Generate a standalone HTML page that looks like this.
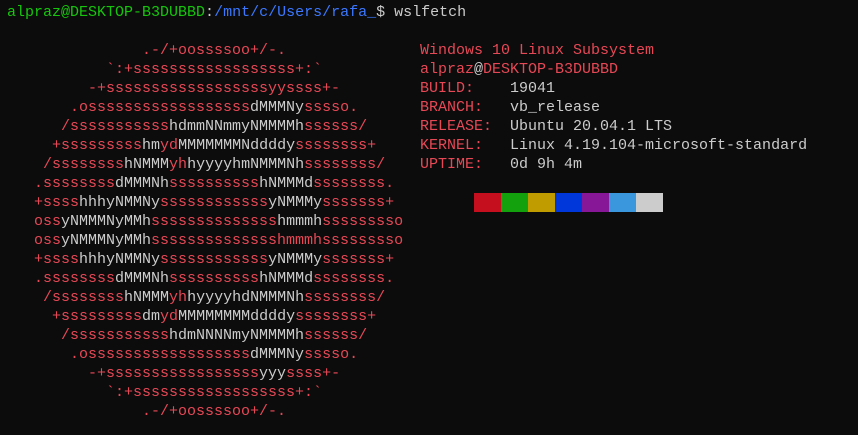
<!DOCTYPE html>
<html><head><meta charset="utf-8"><style>
html,body{margin:0;padding:0;background:#0c0c0c;width:858px;height:435px;overflow:hidden}
pre{margin:0;font-family:"Liberation Mono","DejaVu Sans Mono",monospace;font-size:15px;line-height:19px;color:#cccccc}
#main{padding:3px 0 0 7px}
#info{position:absolute;left:420px;top:41px}
.r{color:#e74856}.g{color:#16c60c}.b{color:#3b78ff}.w{color:#cccccc}
.sq{position:absolute;top:193px;height:19px;width:27px}
</style></head><body>
<pre id="main"><span class="g">alpraz@DESKTOP-B3DUBBD</span><span class="w">:</span><span class="b">/mnt/c/Users/rafa_</span><span class="w">$ wslfetch</span>

<span class="r">               .-/+oossssoo+/-.</span>
<span class="r">           `:+ssssssssssssssssss+:`</span>
<span class="r">         -+ssssssssssssssssssyyssss+-</span>
<span class="r">       .ossssssssssssssssss</span>dMMMNy<span class="r">sssso.</span>
<span class="r">      /sssssssssss</span>hdmmNNmmyNMMMMh<span class="r">ssssss/</span>
<span class="r">     +sssssssss</span>hm<span class="r">yd</span>MMMMMMMNddddy<span class="r">ssssssss+</span>
<span class="r">    /ssssssss</span>hNMMM<span class="r">yh</span>hyyyyhmNMMMNh<span class="r">ssssssss/</span>
<span class="r">   .ssssssss</span>dMMMNh<span class="r">ssssssssss</span>hNMMMd<span class="r">ssssssss.</span>
<span class="r">   +ssss</span>hhhyNMMNy<span class="r">ssssssssssss</span>yNMMMy<span class="r">sssssss+</span>
<span class="r">   oss</span>yNMMMNyMMh<span class="r">ssssssssssssss</span>hmmmh<span class="r">sssssssso</span>
<span class="r">   oss</span>yNMMMNyMMh<span class="r">sssssssssssssshmmmhsssssssso</span>
<span class="r">   +ssss</span>hhhyNMMNy<span class="r">ssssssssssss</span>yNMMMy<span class="r">sssssss+</span>
<span class="r">   .ssssssss</span>dMMMNh<span class="r">ssssssssss</span>hNMMMd<span class="r">ssssssss.</span>
<span class="r">    /ssssssss</span>hNMMM<span class="r">yh</span>hyyyyhdNMMMNh<span class="r">ssssssss/</span>
<span class="r">     +sssssssss</span>dm<span class="r">yd</span>MMMMMMMMddddy<span class="r">ssssssss+</span>
<span class="r">      /sssssssssss</span>hdmNNNNmyNMMMMh<span class="r">ssssss/</span>
<span class="r">       .ossssssssssssssssss</span>dMMMNy<span class="r">sssso.</span>
<span class="r">         -+sssssssssssssssss</span>yyy<span class="r">ssss+-</span>
<span class="r">           `:+ssssssssssssssssss+:`</span>
<span class="r">               .-/+oossssoo+/-.</span></pre>
<pre id="info"><span class="r">Windows 10 Linux Subsystem</span>
<span class="r">alpraz</span>@<span class="r">DESKTOP-B3DUBBD</span>
<span class="r">BUILD:</span>    19041
<span class="r">BRANCH:</span>   vb_release
<span class="r">RELEASE:</span>  Ubuntu 20.04.1 LTS
<span class="r">KERNEL:</span>   Linux 4.19.104-microsoft-standard
<span class="r">UPTIME:</span>   0d 9h 4m</pre>
<span class="sq" style="left:474px;background:#c50f1f"></span><span class="sq" style="left:501px;background:#13a10e"></span><span class="sq" style="left:528px;background:#c19c00"></span><span class="sq" style="left:555px;background:#0037da"></span><span class="sq" style="left:582px;background:#881798"></span><span class="sq" style="left:609px;background:#3a96dd"></span><span class="sq" style="left:636px;background:#cccccc"></span>
</body></html>
